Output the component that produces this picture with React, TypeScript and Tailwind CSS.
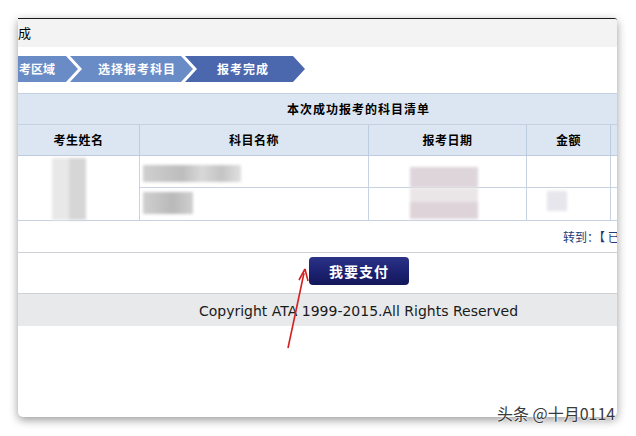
import React from 'react';

const cjk = "font-['Noto_Sans_CJK_SC',sans-serif]";

function Blur({ className }: { className: string }) {
    return <div className={`blur-[1.5px] ${className}`} />;
}

export default function App() {
    return (
        <div className="relative w-[636px] h-[436px] overflow-hidden bg-white">
            <div className="ml-[18px] mt-[18px] w-[599px] h-[399px] overflow-hidden rounded-b-[5px] rounded-tr-[3px] border-t border-[#1a1a1a] bg-white shadow-[0_3px_10px_rgba(0,0,0,0.4)]">
                {/* title bar */}
                <div className={`h-[28px] flex items-center bg-[#f3f3f3] text-[13px] text-black ${cjk}`}>成</div>

                {/* steps */}
                <div className={`flex pt-[9px] pb-[11px] text-[12px] font-bold text-white ${cjk}`}>
                    <div className="w-[60px] h-[26px] flex items-center pl-[1px] bg-[#6a8cc6] [clip-path:polygon(0_0,calc(100%-12px)_0,100%_50%,calc(100%-12px)_100%,0_100%)]">
                        考区域
                    </div>
                    <div className="ml-[-8px] w-[123px] h-[26px] flex items-center pl-[28px] tracking-[1px] bg-[#6a8cc6] [clip-path:polygon(0_0,calc(100%-12px)_0,100%_50%,calc(100%-12px)_100%,0_100%,12px_50%)]">
                        选择报考科目
                    </div>
                    <div className="ml-[-8px] w-[120px] h-[26px] flex items-center pl-[32px] tracking-[1px] bg-[#4b68ae] [clip-path:polygon(0_0,calc(100%-12px)_0,100%_50%,calc(100%-12px)_100%,0_100%,12px_50%)]">
                        报考完成
                    </div>
                </div>

                {/* table */}
                <div className={`border-t border-[#c3d1e2] text-[12px] ${cjk}`}>
                    <div className="h-[31px] flex items-center justify-center pl-[82px] tracking-[1px] bg-[#dce6f2] border-b border-[#c3d1e2] font-bold text-black">
                        本次成功报考的科目清单
                    </div>
                    <div className="grid grid-cols-[122px_229px_158px_84px_1fr] h-[31px] bg-[#dce6f2] border-b border-[#bccbdd] font-bold text-black tracking-[0.5px]">
                        <div className="flex items-center justify-center border-r border-[#bccbdd]">考生姓名</div>
                        <div className="flex items-center justify-center border-r border-[#bccbdd]">科目名称</div>
                        <div className="flex items-center justify-center border-r border-[#bccbdd]">报考日期</div>
                        <div className="flex items-center justify-center border-r border-[#bccbdd]">金额</div>
                        <div />
                    </div>
                    <div className="grid grid-cols-[122px_229px_158px_84px_1fr] h-[65px] border-b border-[#c7d3e2]">
                        <div className="border-r border-[#c7d3e2] pt-[2px] pl-[34px]">
                            <Blur className="w-[34px] h-[62px] bg-[linear-gradient(90deg,#e8e8e8_0,#e8e8e8_50%,#d6d6d6_50%)]" />
                        </div>
                        <div className="border-r border-[#c7d3e2] grid grid-rows-[32px_33px]">
                            <div className="border-b border-[#c7d3e2] pl-[3px] pt-[9px]">
                                <Blur className="w-[98px] h-[17px] bg-[linear-gradient(90deg,#cfcfcf_0,#bdbdbd_40%,#d8d8d8_60%,#c4c4c4_80%,#e0e0e0)]" />
                            </div>
                            <div className="pl-[3px] pt-[4px]">
                                <Blur className="w-[50px] h-[22px] bg-[linear-gradient(90deg,#cfcfcf_0,#b9b9b9_60%,#d0d0d0)]" />
                            </div>
                        </div>
                        <div className="border-r border-[#c7d3e2] grid grid-rows-[32px_33px]">
                            <div className="border-b border-[#c7d3e2] pl-[41px] pt-[11px]">
                                <Blur className="w-[68px] h-[21px] bg-[#ddd5d9]" />
                            </div>
                            <div className="pl-[41px]">
                                <Blur className="w-[68px] h-[31px] bg-[linear-gradient(180deg,#eae6e8_0,#eae6e8_45%,#ddd3d8_45%)]" />
                            </div>
                        </div>
                        <div className="border-r border-[#c7d3e2] grid grid-rows-[32px_33px]">
                            <div className="border-b border-[#c7d3e2]" />
                            <div className="pl-[20px] pt-[3px]">
                                <Blur className="w-[20px] h-[20px] bg-[#e6e6ec]" />
                            </div>
                        </div>
                        <div className="grid grid-rows-[32px_33px]">
                            <div className="border-b border-[#c7d3e2]" />
                            <div />
                        </div>
                    </div>
                    <div className="h-[32px] flex items-center pl-[545px] whitespace-nowrap text-[#1e3a78] border-b border-[#cfd3d8]">
                        转到：【 已
                    </div>
                </div>

                {/* pay button */}
                <div className="flex pl-[291px] pt-[4px] pb-[8px]">
                    <button className={`w-[100px] h-[28px] rounded-[4px] bg-[linear-gradient(180deg,#2b3388_0,#1c2170_55%,#13175a)] text-white text-[14px] font-bold tracking-[1px] ${cjk}`}>
                        我要支付
                    </button>
                </div>

                {/* footer */}
                <div className="h-[33px] flex items-center justify-center pl-[82px] pt-[3px] bg-[#e8e9ea] border-t border-[#cfd1d3] text-[14px] text-[#1a1a1a] font-['DejaVu_Sans',sans-serif]">
                    Copyright ATA 1999-2015.All Rights Reserved
                </div>
            </div>

            {/* annotation arrow */}
            <svg className="absolute left-0 top-0 pointer-events-none" width="636" height="436">
                <line x1="288" y1="348" x2="304" y2="273" stroke="#d42020" strokeWidth="1.6" />
                <path d="M305 269 L299 280 M305 269 L308 281" stroke="#d42020" strokeWidth="1.6" fill="none" />
            </svg>

            <div className={`absolute left-[497px] top-[401px] text-[16px] text-[#3a3a3a] [text-shadow:0_0_2px_#fff,0_0_2px_#fff] ${cjk}`}>
                头条 @十月0114
            </div>
        </div>
    );
}
